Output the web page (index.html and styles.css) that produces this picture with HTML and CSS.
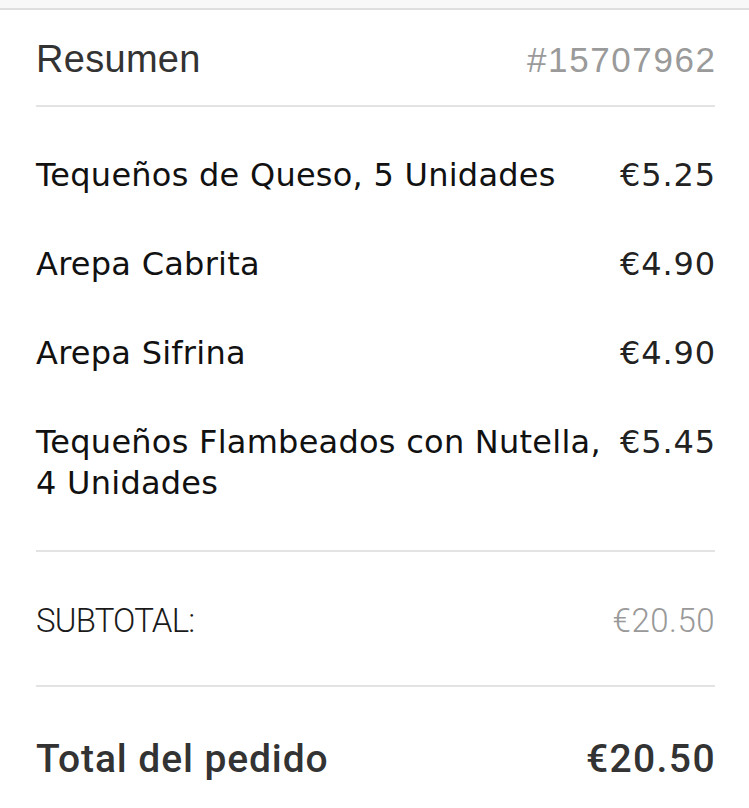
FILE: index.html
```html
<!DOCTYPE html>
<html lang="es">
<head>
<meta charset="utf-8">
<title>Resumen</title>
<link rel="stylesheet" href="styles.css">
</head>
<body>
<div class="topbar"></div>
<main class="summary">
  <header class="summary-head">
    <h1 class="title">Resumen</h1>
    <span class="order-id">#15707962</span>
  </header>
  <ul class="items">
    <li class="item"><span class="item-name">Tequeños de Queso, 5 Unidades</span><span class="item-price">€5.25</span></li>
    <li class="item"><span class="item-name">Arepa Cabrita</span><span class="item-price">€4.90</span></li>
    <li class="item"><span class="item-name">Arepa Sifrina</span><span class="item-price">€4.90</span></li>
    <li class="item"><span class="item-name">Tequeños Flambeados con Nutella, 4 Unidades</span><span class="item-price">€5.45</span></li>
  </ul>
  <div class="subtotal">
    <span class="subtotal-label">SUBTOTAL:</span>
    <span class="subtotal-value">€20.50</span>
  </div>
  <div class="total">
    <span class="total-label">Total del pedido</span>
    <span class="total-value">€20.50</span>
  </div>
</main>
</body>
</html>
```
FILE: styles.css
```css
* { box-sizing: border-box; }
html, body { margin: 0; padding: 0; background: #fff; }
body {
  font-family: "Liberation Sans", Arial, sans-serif;
  color: #111;
  width: 749px;
  height: 808px;
  overflow: hidden;
}
.topbar {
  height: 10px;
  background: #f8f8f8;
  border-bottom: 2px solid #dedede;
}
.summary {
  padding: 0 34px 0 36px;
}
.summary-head {
  display: flex;
  justify-content: space-between;
  align-items: baseline;
  padding-top: 27px;
  height: 97px;
  border-bottom: 2px solid #e3e3e3;
}
.title {
  margin: 0;
  font-size: 38px;
  font-weight: 400;
  line-height: 44px;
  letter-spacing: 0.3px;
  color: #333;
}
.order-id {
  font-size: 35px;
  color: #9a9a9a;
  line-height: 44px;
  letter-spacing: 1.6px;
  margin-right: -1.6px;
}
.items {
  list-style: none;
  margin: 0;
  padding: 24px 0 22px;
  border-bottom: 2px solid #e3e3e3;
}
.item {
  display: flex;
  justify-content: space-between;
  align-items: flex-start;
  gap: 16px;
  padding: 24px 0;
  font-family: "DejaVu Sans", "Liberation Sans", sans-serif;
  font-size: 32px;
  line-height: 41px;
  letter-spacing: 0.25px;
  color: #111;
}
.item-price {
  flex: none;
  color: #222;
  letter-spacing: 0.9px;
  margin-right: -1px;
}
.subtotal {
  display: flex;
  justify-content: space-between;
  align-items: center;
  height: 135px;
  padding-top: 4px;
  border-bottom: 2px solid #e3e3e3;
}
.subtotal-label {
  font-family: Roboto, "Liberation Sans", sans-serif;
  font-size: 33px;
  font-weight: 300;
  letter-spacing: -0.8px;
  color: #1a1a1a;
}
.subtotal-value {
  font-family: Roboto, "Liberation Sans", sans-serif;
  font-size: 33px;
  font-weight: 300;
  letter-spacing: 0.5px;
  color: #999;
}
.total {
  display: flex;
  justify-content: space-between;
  align-items: center;
  height: 120px;
  padding-top: 24px;
}
.total-label, .total-value {
  font-family: Roboto, "Liberation Sans", sans-serif;
  font-size: 39px;
  font-weight: 500;
  letter-spacing: 0.9px;
  color: #333;
}
.total-value { letter-spacing: 1.4px; margin-right: -1px; }
```
